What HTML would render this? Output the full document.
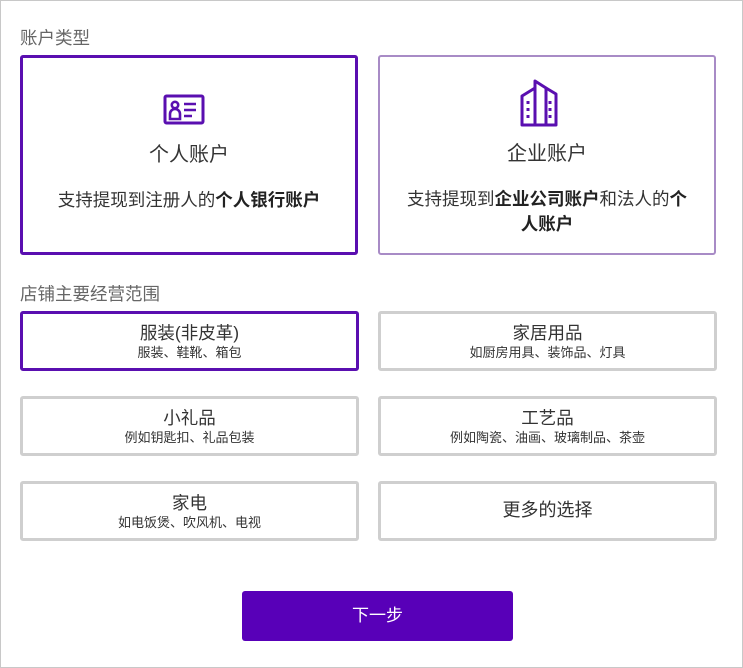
<!DOCTYPE html>
<html><head><meta charset="utf-8"><style>
*{box-sizing:border-box;margin:0;padding:0}
body{width:743px;height:668px;background:#fff;font-family:"Liberation Sans","Noto Sans CJK SC",sans-serif;color:#333;position:relative;overflow:hidden}
.frame{position:absolute;left:0;top:0;width:743px;height:668px;border:1px solid #c8c8c8}
.lbl{position:absolute;left:20px;font-size:17.5px;color:#666}
.card{position:absolute;top:55px;width:338px;height:200px;border-radius:3px;text-align:center}
.card .t{position:absolute;left:0;right:0;top:80px;font-size:20px;color:#333}
.card .d{position:absolute;left:20px;right:20px;top:130px;font-size:17.5px;line-height:25px;color:#333}
.card b{font-weight:bold;color:#222}
.opt{position:absolute;width:339px;height:60px;border:3px solid #cfcfcf;border-radius:3px;text-align:center}
.opt.sel{border-color:#5a0fb0}
.opt .a{font-size:17.5px;line-height:21px;margin-top:9px;color:#333}
.opt .b{font-size:13px;line-height:17px;color:#333}
.btn{position:absolute;left:242px;top:591px;width:271px;height:50px;background:#5800b8;border-radius:3px;color:#fff;font-size:17px;text-align:center;line-height:50px}
</style></head><body>
<div class="frame"></div>
<div class="lbl" style="top:25px">账户类型</div>
<div class="card" style="left:20px;border:3px solid #5a0fb0">
<svg style="position:absolute;left:140px;top:36px" width="42" height="32" viewBox="0 0 42 32"><rect x="2" y="2" width="38" height="27" rx="1.5" fill="none" stroke="#5a0fb0" stroke-width="3"/><circle cx="12" cy="11" r="3.2" fill="none" stroke="#5a0fb0" stroke-width="2.6"/><path d="M7 25v-5a5 5 0 0 1 10 0v5z" fill="none" stroke="#5a0fb0" stroke-width="2.6"/><path d="M21 10h12M21 16h12M21 22h8" stroke="#5a0fb0" stroke-width="2.6"/></svg>
<div class="t">个人账户</div>
<div class="d">支持提现到注册人的<b>个人银行账户</b></div>
</div>
<div class="card" style="left:378px;border:2.5px solid #a88bc6">
<svg style="position:absolute;left:138px;top:22px" width="44" height="48" viewBox="0 0 44 48"><path d="M4 46V17L17 9V46ZM17 46V2L28 9V46ZM4 46H28" fill="none" stroke="#5a0fb0" stroke-width="3" stroke-linejoin="round"/><path d="M28 9L38 15V46H28" fill="none" stroke="#5a0fb0" stroke-width="3" stroke-linejoin="round"/><path d="M10 22v3M10 29v3M10 36v3M32 22v3M32 29v3M32 36v3" stroke="#5a0fb0" stroke-width="3"/></svg>
<div class="t">企业账户</div>
<div class="d">支持提现到<b>企业公司账户</b>和法人的<b>个人账户</b></div>
</div>
<div class="lbl" style="top:281px">店铺主要经营范围</div>
<div class="opt sel" style="left:20px;top:311px"><div class="a">服装(非皮革)</div><div class="b">服装、鞋靴、箱包</div></div>
<div class="opt" style="left:378px;top:311px"><div class="a">家居用品</div><div class="b">如厨房用具、装饰品、灯具</div></div>
<div class="opt" style="left:20px;top:396px"><div class="a">小礼品</div><div class="b">例如钥匙扣、礼品包装</div></div>
<div class="opt" style="left:378px;top:396px"><div class="a">工艺品</div><div class="b">例如陶瓷、油画、玻璃制品、茶壶</div></div>
<div class="opt" style="left:20px;top:481px"><div class="a">家电</div><div class="b">如电饭煲、吹风机、电视</div></div>
<div class="opt" style="left:378px;top:481px"><div class="a" style="font-size:18px;margin-top:16px">更多的选择</div></div>
<div class="btn">下一步</div>
</body></html>
